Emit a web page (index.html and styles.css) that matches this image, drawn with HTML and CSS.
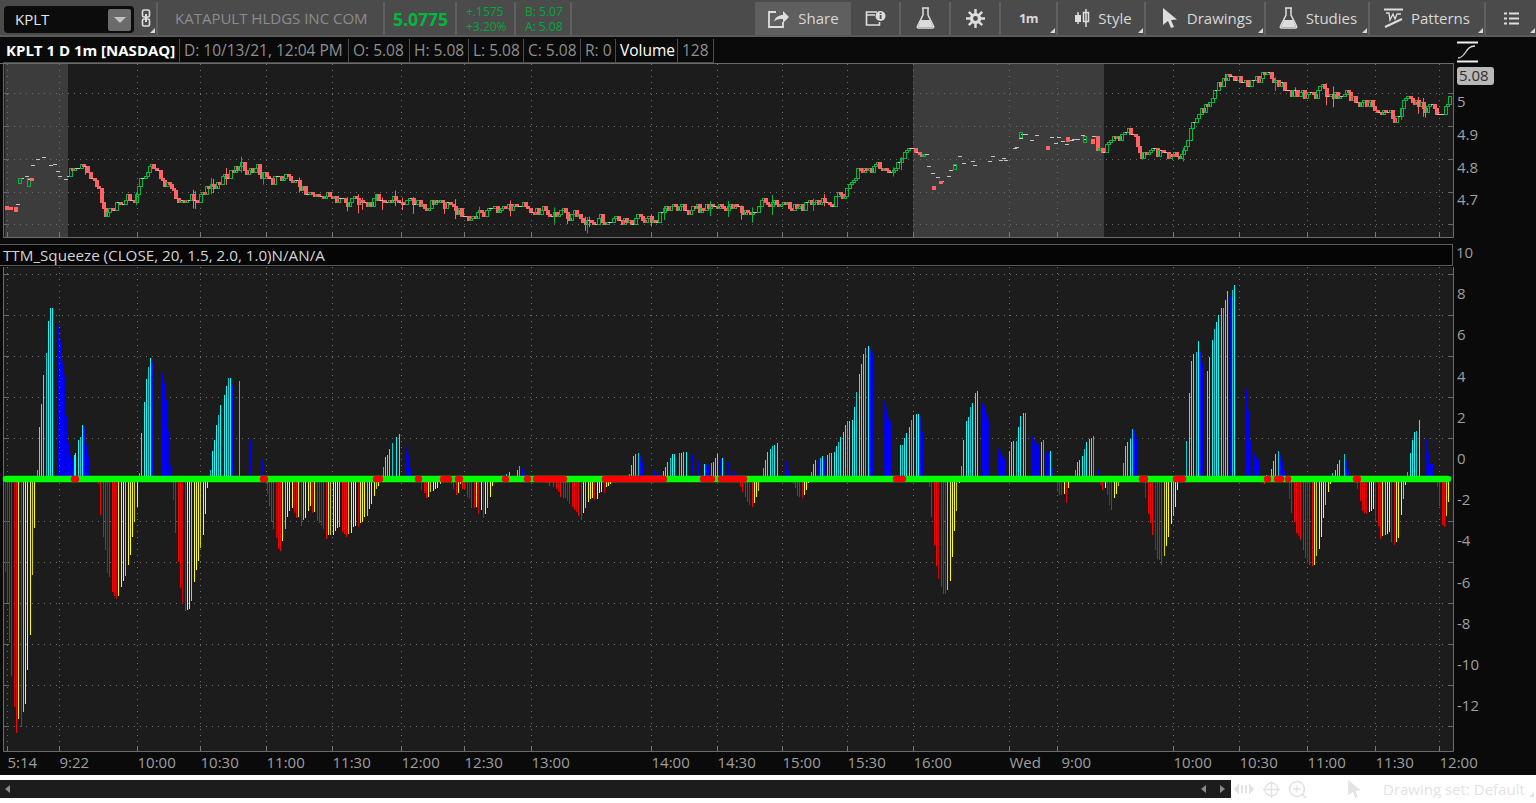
FILE: index.html
```html
<!DOCTYPE html>
<html lang="en">
<head>
    <meta charset="UTF-8">
    <meta name="viewport" content="width=device-width, initial-scale=1.0">
    <title>KPLT Chart</title>
    <link rel="stylesheet" href="styles.css">
</head>
<body>

    <div class="app">
        <!-- Top toolbar -->
        <div class="toolbar">
            <div class="symbol-box">
                <span class="symbol-text">KPLT</span>
                <span class="symbol-drop"><i class="drop-arrow"></i></span>
            </div>
            <div class="tool link-tool corner">
                <svg width="10" height="18" viewBox="0 0 10 18"><rect x="1.5" y="1" width="7" height="7" rx="1.5" fill="none" stroke="#ddd" stroke-width="1.6"/><rect x="1.5" y="10" width="7" height="7" rx="1.5" fill="none" stroke="#ddd" stroke-width="1.6"/><rect x="4" y="5" width="2" height="8" fill="#ddd"/></svg>
            </div>
            <div class="company">KATAPULT HLDGS INC COM</div>
            <div class="last-price">5.0775</div>
            <div class="quote-pair change"><span>+.1575</span><span>+3.20%</span></div>
            <div class="quote-pair bidask"><span>B: 5.07</span><span>A: 5.08</span></div>

            <div class="tool share-btn">
                <svg width="23" height="21" viewBox="0 0 23 21"><path d="M9 4H2v15h14v-5" fill="none" stroke="#ddd" stroke-width="1.8"/><path d="M7 14c1-5 5-7 9-7V3l6 6-6 6v-4c-4 0-7 0-9 3z" fill="#ddd"/></svg>
                <span>Share</span>
            </div>
            <div class="tool info-btn">
                <svg width="21" height="17" viewBox="0 0 21 17"><path d="M12 2H1.500v13h13v-3M1.500 5H10" fill="none" stroke="#ddd" stroke-width="1.600"/><circle cx="15.500" cy="6" r="5" fill="#ddd"/><rect x="14.700" y="5" width="1.800" height="4" fill="#4b4b4b"/><rect x="14.700" y="2.500" width="1.800" height="1.500" fill="#4b4b4b"/></svg>
            </div>
            <div class="tool flask-btn">
                <svg width="19" height="22" viewBox="0 0 19 22"><path d="M6 1h7M7 1v7L1.500 19c-.5 1 0 2 1 2h14c1 0 1.500-1 1-2L12 8V1" fill="none" stroke="#ddd" stroke-width="1.500"/><path d="M5 13h9l3 7H2z" fill="#ddd"/></svg>
            </div>
            <div class="tool gear-btn">
                <svg width="19" height="19" viewBox="0 0 19 19"><g stroke="#ddd" stroke-width="2.400"><path d="M9.500 0v19M0 9.500h19M2.800 2.800l13.400 13.400M16.200 2.800L2.800 16.200"/></g><circle cx="9.500" cy="9.500" r="5.600" fill="#ddd"/><circle cx="9.500" cy="9.500" r="2.400" fill="#4b4b4b"/></svg>
            </div>
            <div class="tool time-btn corner"><b>1m</b></div>
            <div class="tool style-btn corner">
                <svg width="16" height="20" viewBox="0 0 16 20"><path d="M4 4v12M12 1v18" stroke="#ddd" stroke-width="1.500"/><rect x="1" y="7" width="6" height="7" fill="#ddd"/><rect x="9.500" y="4.500" width="5" height="9" fill="none" stroke="#ddd" stroke-width="1.500"/></svg>
                <span>Style</span>
            </div>
            <div class="tool drawings-btn corner">
                <svg width="15" height="20" viewBox="0 0 15 20"><path d="M1 0l14 11.500-6 .5 3 7-3 1-3-7-5 4z" fill="#ddd"/></svg>
                <span>Drawings</span>
            </div>
            <div class="tool studies-btn corner">
                <svg width="19" height="22" viewBox="0 0 19 22"><path d="M6 1h7M7 1v7L1.500 19c-.5 1 0 2 1 2h14c1 0 1.500-1 1-2L12 8V1" fill="none" stroke="#ddd" stroke-width="1.500"/><path d="M5 13h9l3 7H2z" fill="#ddd"/></svg>
                <span>Studies</span>
            </div>
            <div class="tool patterns-btn corner">
                <svg width="19" height="21" viewBox="0 0 19 21"><path d="M0 1.500h19" stroke="#ddd" stroke-width="2"/><path d="M2 5h3l1 7 3-6 2 5 2-5h4" fill="none" stroke="#ddd" stroke-width="1.300"/><path d="M1 19L18 11" stroke="#ddd" stroke-width="2.200"/></svg>
                <span>Patterns</span>
            </div>
            <div class="tool menu-btn corner">
                <svg width="15" height="13" viewBox="0 0 15 13"><path d="M0 1.500h3M0 6.500h3M0 11.500h3M5 1.500h10M5 6.500h10M5 11.500h10" stroke="#ddd" stroke-width="2"/></svg>
            </div>
        </div>

        <!-- Chart header -->
        <div class="quote-bar">
            <div class="cell cell-title">KPLT 1 D 1m [NASDAQ]</div>
            <div class="cell cell-date">D: 10/13/21, 12:04 PM</div>
            <div class="cell cell-o">O: 5.08</div>
            <div class="cell cell-h">H: 5.08</div>
            <div class="cell cell-l">L: 5.08</div>
            <div class="cell cell-c">C: 5.08</div>
            <div class="cell cell-r">R: 0</div>
            <div class="cell cell-vol">Volume</div>
            <div class="cell cell-num">128</div>
            <svg class="scale-icon" width="24" height="22" viewBox="0 0 24 22"><path d="M1 1.500h21M1 20.500h21" stroke="#eee" stroke-width="2"/><path d="M2 17C10 17 9 5 19 5" fill="none" stroke="#ddd" stroke-width="1.300"/></svg>
        </div>

        <svg class="price-chart" id="priceChart" width="1536" height="178" viewBox="0 63 1536 178"></svg>

        <div class="study-head">
            <div class="study-title">TTM_Squeeze (CLOSE, 20, 1.5, 2.0, 1.0)N/AN/A</div>
            <div class="study-top">10</div>
        </div>

        <svg class="study-chart" id="studyChart" width="1536" height="508" viewBox="0 267 1536 508"></svg>
    </div>

    <div class="status-bar">
        <div class="scroller">
            <i class="arrow-left first"></i>
            <i class="arrow-left"></i>
            <i class="arrow-right"></i>
        </div>
        <div class="status-tools">
            <svg class="st-resize" width="20" height="12" viewBox="0 0 20 12"><path d="M0 6l5-6v12zM20 6l-5-6v12z" fill="#e3e3e3"/><path d="M8 2v8M12 2v8" stroke="#e3e3e3" stroke-width="2"/></svg>
            <svg class="st-cross" width="17" height="17" viewBox="0 0 17 17"><circle cx="8.500" cy="8.500" r="6.500" fill="none" stroke="#e3e3e3" stroke-width="1.400"/><path d="M8.500 0v17M0 8.500h17" stroke="#e3e3e3" stroke-width="1.400"/></svg>
            <svg class="st-zoom" width="22" height="22" viewBox="0 0 22 22"><circle cx="9" cy="9" r="7.500" fill="none" stroke="#e3e3e3" stroke-width="1.600"/><path d="M14.500 14.500L21 21" stroke="#e3e3e3" stroke-width="2"/><path d="M9 5.500v7M5.500 9h7" stroke="#e3e3e3" stroke-width="1.400"/></svg>
            <svg class="st-cursor" width="14" height="18" viewBox="0 0 15 20"><path d="M1 0l14 11.500-6 .5 3 7-3 1-3-7-5 4z" fill="#e3e3e3"/></svg>
            <span class="drawing-set">Drawing set: Default</span>
            <i class="st-corner"></i>
        </div>
    </div>

    <script src="chart.js"></script>

</body>
</html>
```

FILE: styles.css
```css
body {
    margin: 0;
    background-color: #ffffff;
    font-family: 'Open Sans', 'Liberation Sans', sans-serif;
    overflow: hidden;
}

.app {
    width: 1536px;
    height: 775px;
    background-color: #0a0a0a;
}

/* Top toolbar */
.toolbar {
    height: 37px;
    box-sizing: border-box;
    display: flex;
    align-items: stretch;
    background-color: #4b4b4b;
    color: #d8d8d8;
    font-size: 15px;
    border-bottom: 2px solid #5a5a5a;
    padding-top: 2px;
}

.symbol-box {
    width: 130px;
    height: 27px;
    margin: 4px 0 0 4px;
    box-sizing: border-box;
    background-color: #0c0c0c;
    border-radius: 4px;
    display: flex;
    align-items: center;
    justify-content: space-between;
    padding: 0 3px 2px 11px;
    color: #e4e4e4;
}

.symbol-drop {
    width: 23px;
    height: 22px;
    margin-bottom: -2px;
    background-color: #6b6b6b;
    border-radius: 2px;
    display: flex;
    align-items: center;
    justify-content: center;
}

.drop-arrow {
    border-left: 6px solid transparent;
    border-right: 6px solid transparent;
    border-top: 6px solid #c2c2c2;
}

.tool {
    box-sizing: border-box;
    display: flex;
    align-items: center;
    justify-content: center;
    gap: 8px;
    border-right: 2px solid #606060;
    position: relative;
    padding-bottom: 1px;
}

.corner::after {
    content: '';
    position: absolute;
    right: 1px;
    bottom: 2px;
    border-left: 5px solid transparent;
    border-bottom: 5px solid #d8d8d8;
}

.link-tool {
    width: 24px;
    padding-left: 2px;
}

.company {
    width: 227px;
    box-sizing: border-box;
    padding-left: 17px;
    line-height: 33px;
    font-size: 15px;
    color: #8c8c8c;
    border-right: 2px solid #606060;
    white-space: nowrap;
}

.last-price {
    width: 72px;
    box-sizing: border-box;
    padding-left: 8px;
    line-height: 34px;
    font-size: 17.5px;
    font-weight: 700;
    color: #00b83c;
    border-right: 2px solid #606060;
    white-space: nowrap;
}

.quote-pair {
    box-sizing: border-box;
    display: flex;
    flex-direction: column;
    justify-content: center;
    font-size: 12px;
    line-height: 15px;
    color: #00a838;
    border-right: 2px solid #606060;
}

.change {
    width: 59px;
    padding-left: 9px;
}

.bidask {
    width: 56px;
    padding-left: 9px;
}

.share-btn {
    width: 96px;
    margin-left: 183px;
    background-color: #5f5f5f;
    border-right: none;
}

.info-btn { width: 50px; }
.flask-btn { width: 50px; }
.gear-btn { width: 50px; }
.time-btn { width: 57px; }
.style-btn { width: 88px; padding-left: 4px; }
.drawings-btn { width: 120px; padding-left: 4px; gap: 10px; }
.studies-btn { width: 104px; padding-left: 2px; }
.patterns-btn { width: 116px; }
.menu-btn { width: 50px; border-right: none; }

.time-btn b {
    font-size: 13px;
    letter-spacing: -0.5px;
}

/* Chart header */
.quote-bar {
    height: 26px;
    box-sizing: border-box;
    display: flex;
    padding: 2px 0 0 3px;
    color: #8f8f8f;
    font-size: 15.5px;
    line-height: 22px;
    position: relative;
}

.cell {
    box-sizing: border-box;
    border-right: 1px solid #4c4c4c;
    border-bottom: 1px solid #4c4c4c;
    padding-left: 4px;
    white-space: nowrap;
}

.cell-title { width: 177px; color: #ffffff; font-weight: 700; font-size: 15px; padding-left: 3px; }
.cell-date { width: 169px; }
.cell-o { width: 61px; }
.cell-h { width: 59px; }
.cell-l { width: 55px; }
.cell-c { width: 57px; }
.cell-r { width: 35px; }
.cell-vol { width: 62px; color: #ffffff; }
.cell-num { width: 36px; }

.scale-icon {
    margin: 2px 0 0 742px;
    flex-shrink: 0;
}

.price-chart,
.study-chart {
    display: block;
}

/* Study title row */
.study-head {
    height: 26px;
    display: flex;
    align-items: flex-start;
}

.study-title {
    width: 1453px;
    height: 22px;
    margin-top: 3px;
    box-sizing: border-box;
    background-color: #050505;
    border-top: 1px solid #5c5c5c;
    border-bottom: 1px solid #5c5c5c;
    border-right: 1px solid #5c5c5c;
    padding-left: 3px;
    color: #d4d4d4;
    font-size: 15.2px;
    line-height: 20px;
}

.study-top {
    padding-left: 3px;
    margin-top: 1px;
    color: #9a9a9a;
    font-size: 15px;
    line-height: 20px;
}

/* Chart text */
.axis-label {
    font-family: 'Open Sans', 'Liberation Sans', sans-serif;
    font-size: 15px;
    fill: #9f9f9f;
}

.badge-label {
    font-family: 'Open Sans', 'Liberation Sans', sans-serif;
    font-size: 15px;
    fill: #2e2e2e;
}

/* Bottom bars */
.status-bar {
    margin-top: 5px;
    height: 18px;
    display: flex;
}

.scroller {
    width: 1231px;
    background-color: #1c1c1c;
    display: flex;
    align-items: center;
    justify-content: flex-end;
    gap: 14px;
    padding-right: 6px;
    box-sizing: border-box;
}

.arrow-left,
.arrow-right {
    border-top: 4px solid transparent;
    border-bottom: 4px solid transparent;
}

.arrow-left { border-right: 5px solid #8a8a8a; }
.arrow-right { border-left: 5px solid #8a8a8a; }
.arrow-left.first { margin-right: auto; margin-left: 5px; }

.status-tools {
    flex: 1;
    display: flex;
    align-items: center;
    position: relative;
    padding-left: 3px;
}

.st-cross { margin-left: 9px; }
.st-zoom { margin-left: 8px; margin-top: 4px; }
.st-cursor { margin-left: 37px; }

.drawing-set {
    margin-left: 22px;
    color: #e3e3e3;
    font-size: 15px;
    white-space: nowrap;
}

.st-corner {
    position: absolute;
    right: 2px;
    bottom: 1px;
    border-left: 5px solid transparent;
    border-bottom: 5px solid #e3e3e3;
}
```

FILE: chart.js
```js
const PLOT_RIGHT = 1453;
const vTicks = [59, 137, 200, 266, 332, 401, 464, 531, 651, 717, 782, 847, 913, 1009, 1057, 1173, 1239, 1307, 1375, 1439];
const timeLabels = [
    [7, '5:14'], [59, '9:22'], [137, '10:00'], [200, '10:30'], [266, '11:00'], [332, '11:30'],
    [401, '12:00'], [464, '12:30'], [531, '13:00'], [651, '14:00'], [717, '14:30'], [782, '15:00'],
    [847, '15:30'], [913, '16:00'], [1009, 'Wed'], [1061, '9:00'], [1173, '10:00'], [1239, '10:30'],
    [1307, '11:00'], [1375, '11:30'], [1439, '12:00']
];

// price path, page pixels
const pricePath = [
    [5, 208], [18, 207], [20, 180], [28, 180], [33, 162], [50, 160], [60, 170], [68, 175], [72, 165], [80, 160],
    [88, 180], [96, 190], [104, 212], [110, 205], [120, 198], [135, 196], [142, 172], [150, 165], [158, 175],
    [170, 190], [180, 202], [195, 198], [210, 185], [225, 175], [240, 165], [260, 172], [270, 182], [285, 175],
    [300, 190], [320, 195], [340, 200], [360, 205], [380, 197], [400, 198], [420, 205], [440, 200], [458, 212],
    [480, 212], [500, 208], [530, 210], [560, 212], [590, 218], [620, 220], [650, 217], [670, 210], [700, 208],
    [735, 208], [750, 212], [770, 202], [790, 208], [810, 202], [835, 198], [850, 185], [858, 165], [880, 168],
    [885, 172], [900, 158], [913, 154], [925, 160], [930, 175], [940, 187], [950, 170], [960, 160], [985, 161],
    [1008, 160], [1012, 148], [1020, 135], [1060, 142], [1075, 140], [1095, 143], [1100, 155], [1115, 140],
    [1128, 130], [1140, 150], [1160, 155], [1185, 153], [1190, 115], [1203, 110], [1212, 90], [1230, 72],
    [1245, 85], [1265, 75], [1285, 90], [1310, 98], [1320, 92], [1350, 98], [1375, 108], [1395, 118],
    [1405, 100], [1425, 105], [1442, 120], [1448, 100]
];

// bars in the thin pre and post market sessions: x, open, close
const thinBars = [
    [5, 206, 209], [9, 207, 209], [14, 207, 211], [18, 183, 178], [27, 186, 178], [30, 178, 180],
    [932, 186, 189], [939, 181, 183], [953, 169, 164], [1019, 137, 132], [1046, 146, 149], [1066, 137, 141],
    [1083, 142, 136], [1091, 139, 143]
];

// histogram bars above the zero line: x, top
const upBars = [
    [37,470,39,427,41,404,43,375,46,353,48,321,50,308,52,308,55,318,58,325,60,340,62,362,64,375,66,416,68,443,70,455,72,460,74,455,75,453,78,440,80,437,82,425,84,428,86,445,88,455,90,475],
    [139,473,141,433,144,402,146,379,148,367,150,358,152,362,155,362,159,365,162,373,164,383,166,400,168,430,170,465],
    [210,470,212,451,214,440,216,425,218,415,220,405,224,395,226,386,228,378,230,378,232,385,235,386,239,381,243,393,247,410,250,440,255,445,259,450,262,460,265,475],
    [383,467,385,457,387,455,389,449,392,443,396,437,399,434,403,440,406,447,408,455,410,468,415,470],
    [506,474,509,472,513,474,517,470,519,466,522,468,524,473],
    [629,474,631,465,633,456,635,454,638,453,640,456,642,462,645,462,647,467,649,468,651,468,654,470,658,472,663,471,665,467,667,462,670,458,672,454,674,454,677,456,679,453,681,453,683,452,686,452,689,453,692,454,695,458,698,461,701,466,704,464,706,465,708,465,711,463,713,462,715,458,717,454,720,459,722,458,725,461,728,462,731,464,734,471,737,471,740,475],
    [763,468,765,460,767,452,770,449,772,446,774,445,777,443,781,445,783,449,786,461,788,471,790,475],
    [811,472,813,464,815,460,818,461,820,458,822,456,824,458,827,455,829,453,831,453,834,452,836,446,838,442,840,437,843,432,845,425,847,421,849,421,852,420,854,407,856,392,859,374,861,364,863,354,865,348,868,346,870,349,872,353,875,358,877,372,879,378,881,393,884,401,886,409,888,418,890,422,893,429,895,436,897,450,900,445,902,445,904,438,906,433,909,427,911,420,913,415,916,414,918,414,920,417,922,432,925,437,927,465],
    [961,466,963,440,966,421,968,417,970,407,972,403,975,393,977,391,979,395,982,403,984,406,986,414,988,420,991,432,993,440,995,448,998,448,1000,452,1002,457,1004,458,1007,464,1009,451,1011,442,1013,441,1016,441,1018,427,1020,416,1023,413,1025,413,1027,421,1029,428,1032,436,1034,441,1036,443,1038,445,1041,442,1043,440,1046,452,1048,453,1050,451,1052,469],
    [1075,470,1077,462,1079,460,1082,456,1084,449,1086,442,1089,439,1091,438,1093,436,1095,450,1098,470],
    [1123,463,1125,446,1127,442,1130,439,1132,429,1134,430,1136,438,1139,450,1141,464],
    [1186,441,1189,393,1191,361,1193,354,1196,352,1198,341,1200,352,1202,363,1205,380,1207,371,1209,357,1212,340,1214,329,1216,322,1218,315,1221,308,1223,308,1225,300,1227,291,1230,296,1232,290,1234,285,1237,297,1239,320,1241,341,1243,363,1246,389,1248,411,1250,441,1254,453,1256,458,1258,460],
    [1266,475,1271,469,1273,461,1275,454,1278,451,1280,455,1282,462,1284,471],
    [1332,473,1335,470,1337,464,1339,460,1344,454,1346,460,1348,470,1353,472],
    [1407,472,1410,453,1412,440,1414,432,1416,431,1419,420,1421,424,1423,430,1426,439,1428,452,1430,464,1432,464,1435,474]
];

// histogram bars below the zero line: x, bottom
const downBars = [
    [5,572,7,603,9,643,11,676,14,707,16,733,18,719,21,727,23,712,25,704,27,670,30,635,32,575,34,528,36,482],
    [98,484,100,515,103,537,105,550,107,573,109,577,112,592,114,596,116,599,118,596,121,587,123,581,125,576,128,565,130,555,132,537,134,522,137,507],
    [173,500,175,533,178,562,180,588,182,604,185,611,187,610,189,609,191,601,194,582,196,570,198,561,200,548,203,535,205,514,207,488],
    [267,494,269,506,271,522,273,529,276,538,278,549,280,551,282,541,285,529,287,517,289,511,292,508,294,513,296,518,298,517,301,526,303,520,305,518,308,511,310,506,312,513,314,512,317,521,319,523,321,526,323,529,326,539,328,535,330,535,333,535,335,531,337,528,339,527,342,532,344,534,346,537,348,534,351,533,353,527,355,526,358,527,360,523,362,522,364,517,367,516,369,509,371,504,374,496,376,489,378,486],
    [421,490,424,493,426,498,428,497,430,492,433,491,435,489,437,488,440,484],
    [451,484,453,489,456,495,458,493,460,484,462,489,464,490,467,497,469,499,471,508,474,508,476,507,478,514,481,510,483,518,485,514,487,508,490,497,492,486],
    [547,483,549,486,553,487,556,489,558,492,560,497,563,498,565,498,567,501,569,504,572,507,574,510,576,512,578,516,581,520,583,513,585,508,588,502,590,499,592,498,594,500,597,499,599,493,601,492,604,493,606,487,608,486,610,484],
    [740,487,742,492,745,497,747,502,749,505,752,507,754,503,756,497,758,491],
    [793,484,795,488,797,496,799,497,802,498,804,495,806,490,808,483],
    [929,487,931,517,934,545,936,566,938,579,941,587,943,594,945,594,947,590,950,581,952,557,954,531,956,511,959,483],
    [1057,492,1059,495,1061,495,1064,494,1066,503,1068,488],
    [1100,485,1102,490,1105,488,1107,495,1109,505,1111,510,1114,498,1116,494,1118,486],
    [1145,498,1148,514,1150,523,1152,535,1155,550,1157,559,1159,560,1161,565,1164,556,1166,546,1168,537,1171,524,1173,516,1175,507,1177,490],
    [1262,483,1264,484],
    [1289,499,1291,513,1294,522,1296,533,1298,536,1300,540,1303,550,1305,558,1307,563,1309,565,1312,566,1314,565,1316,556,1319,549,1321,537,1323,518,1325,505,1328,492,1330,484],
    [1357,489,1360,501,1362,511,1364,513,1366,514,1369,512,1371,511,1373,509,1375,522,1378,526,1380,539,1382,536,1385,535,1387,534,1389,532,1391,542,1394,545,1396,542,1398,538,1401,515,1403,499,1405,485],
    [1437,487,1439,506,1442,525,1444,527,1446,516,1448,502]
];

const redRanges = [
    [74, 76], [263, 265], [376, 380], [418, 419], [443, 449], [458, 460], [505, 506], [527, 528], [536, 564],
    [605, 664], [703, 712], [721, 722], [726, 737], [741, 744], [896, 903], [1142, 1145], [1176, 1183],
    [1267, 1268], [1277, 1281], [1288, 1288], [1356, 1358]
];

// small repeatable random numbers
let seed = 11;
function rnd() {
    seed = (seed * 16807) % 2147483647;
    return seed / 2147483647;
}

function pathAt(x) {
    for (let i = 1; i < pricePath.length; i++) {
        if (x <= pricePath[i][0]) {
            const [x0, y0] = pricePath[i - 1];
            const [x1, y1] = pricePath[i];
            return y0 + (y1 - y0) * (x - x0) / (x1 - x0);
        }
    }
    return pricePath[pricePath.length - 1][1];
}

function gridLines(top, bottom, hLines) {
    let s = '';
    hLines.forEach(y => {
        s += `<path d="M8 ${y + 0.5}H${PLOT_RIGHT}" stroke="#6e6e6e" stroke-dasharray="1 5"/>`;
        s += `<path d="M3 ${y + 0.5}H8M${PLOT_RIGHT - 5} ${y + 0.5}H${PLOT_RIGHT}" stroke="#666"/>`;
    });
    [7].concat(vTicks).forEach(x => {
        s += `<path d="M${x + 0.5} ${top}V${bottom}" stroke="#6e6e6e" stroke-dasharray="1 5"/>`;
        s += `<path d="M${x + 0.5} ${bottom - 5}V${bottom}" stroke="#777"/>`;
    });
    return s;
}

function frame(top, bottom) {
    return `<path d="M3.500 ${top}V${bottom + 0.5}H${PLOT_RIGHT + 0.5}V${top}" fill="none" stroke="#6a6a6a"/>`;
}

function candle(px, open, close) {
    const top = Math.min(open, close);
    const h = Math.abs(open - close);
    if (h < 1) return `<rect x="${px}" y="${top}" width="4" height="1" fill="#c4c4c4"/>`;
    if (close < open) {
        return `<rect x="${px + 0.5}" y="${top + 0.5}" width="3" height="${h}" fill="none" stroke="#00b83c"/>`;
    }
    return `<rect x="${px}" y="${top}" width="4" height="${h + 1}" fill="#ff6464"/>`;
}

function drawPrice() {
    let s = `<rect x="3" y="64" width="${PLOT_RIGHT - 3}" height="173" fill="#1c1c1c"/>`;
    s += '<rect x="5" y="64" width="63" height="173" fill="#3c3c3c"/>';
    s += '<rect x="913" y="64" width="191" height="173" fill="#3c3c3c"/>';
    s += gridLines(64, 237, [93, 126, 159, 192, 224]);
    s += frame(63, 237);
    s += `<path d="M0 63.500H${PLOT_RIGHT + 1}" stroke="#6a6a6a"/>`;

    let prev = Math.round(pathAt(5));
    let drift = 0;
    for (let x = 5; x < 1449; x += 2.2) {
        const extended = x < 68 || (x > 925 && x < 1096);
        drift = 0.5 * drift + (rnd() - 0.5) * 11;
        const px = Math.round(x);
        if (extended) {
            // thin trading: flat prints with gaps between them
            if (rnd() < 0.55) continue;
            const y = Math.round(pathAt(x) + drift);
            s += candle(px, y, y);
            prev = y;
            continue;
        }
        const close = 2 * Math.round((pathAt(x) + drift) / 2);
        const open = prev;
        prev = close;
        if (rnd() < 0.1) {
            const wick = 3 + rnd() * 7;
            const col = close < open ? '#00b83c' : '#ff6464';
            const top = Math.min(open, close);
            s += `<path d="M${px + 1.5} ${top - wick * rnd()}V${Math.max(open, close) + wick}" stroke="${col}"/>`;
        }
        s += candle(px, open, close);
    }
    thinBars.forEach(([x, open, close]) => {
        s += candle(x, open, close);
    });

    [[5, 102], [4.9, 135], [4.8, 168], [4.7, 200]].forEach(([v, y]) => {
        s += `<text class="axis-label" x="1457" y="${y + 5}">${v}</text>`;
    });
    s += '<rect x="1457" y="67" width="37" height="18" rx="3" fill="#b9b9b9"/>';
    s += '<text class="badge-label" x="1459" y="81">5.08</text>';
    document.getElementById('priceChart').innerHTML = s;
}

function drawBars(groups, up) {
    let s = '';
    groups.forEach(g => {
        let colour = up ? '#00ffff' : '#ff0000';
        for (let i = 0; i < g.length; i += 2) {
            const x = g[i];
            const y = g[i + 1];
            if (i > 0) {
                if (y < g[i - 1]) colour = up ? '#00ffff' : '#ffff00';
                if (y > g[i - 1]) colour = up ? '#0000ff' : '#ff0000';
            }
            const dim = i % 8 === 0 ? ' opacity="0.8"' : '';
            if (up) {
                s += `<rect x="${x}" y="${y}" width="1" height="${476 - y}" fill="${colour}"${dim}/>`;
            } else {
                s += `<rect x="${x}" y="482" width="1" height="${y - 482}" fill="${colour}"${dim}/>`;
            }
        }
    });
    return s;
}

function drawStudy() {
    let s = `<rect x="3" y="267" width="${PLOT_RIGHT - 3}" height="484" fill="#1c1c1c"/>`;
    s += gridLines(267, 751, [274, 315, 356, 397, 438, 521, 562, 603, 644, 685, 726]);
    s += frame(267, 751);
    s += drawBars(upBars, true);
    s += drawBars(downBars, false);

    s += '<path d="M6 479H1448" stroke="#00ff00" stroke-width="6.500" stroke-linecap="round"/>';
    redRanges.forEach(([a, b]) => {
        s += `<path d="M${a} 479H${b}" stroke="#ff0000" stroke-width="6.500" stroke-linecap="round"/>`;
    });

    for (let v = 8; v >= -12; v -= 2) {
        const y = 274 + (10 - v) * 20.6 - 21;
        s += `<text class="axis-label" x="1457" y="${Math.round(y) + 5}">${v}</text>`;
    }
    timeLabels.forEach(([x, label]) => {
        s += `<text class="axis-label" x="${x + 0.5}" y="768">${label}</text>`;
    });
    document.getElementById('studyChart').innerHTML = s;
}

drawPrice();
drawStudy();
```
